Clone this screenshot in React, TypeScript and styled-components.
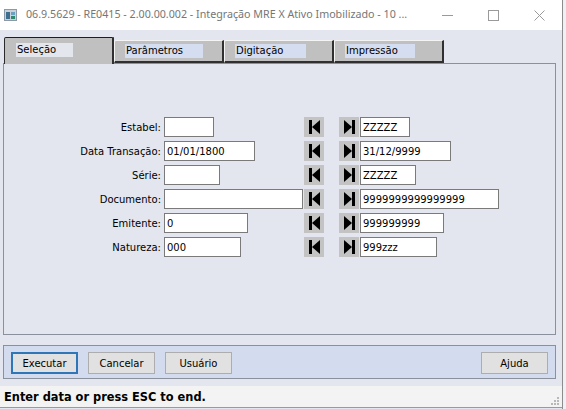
import React from 'react';
import styled, { createGlobalStyle } from 'styled-components';

const GlobalStyle = createGlobalStyle`
  html, body {
    margin: 0;
    padding: 0;
    background: #eef0f4;
  }
  body {
    width: 566px;
    height: 409px;
    overflow: hidden;
  }
  * {
    box-sizing: border-box;
  }
`;

const Window = styled.div`
  width: 563px;
  height: 409px;
  display: flex;
  flex-direction: column;
  background: #e3e6ee;
  border-right: 1px solid #8c8c8c;
  font-family: 'DejaVu Sans', Verdana, sans-serif;
  font-size: 10px;
  color: #000;
`;

const TitleBar = styled.div`
  height: 30px;
  flex: none;
  display: flex;
  align-items: center;
  background: #fff;
`;

const AppIcon = styled.svg`
  margin: 0 9px 1px 4px;
  flex: none;
`;

const TitleText = styled.div`
  flex: 1;
  min-width: 0;
  font-family: 'Noto Sans', 'Open Sans', sans-serif;
  font-size: 10.7px;
  color: #767676;
  white-space: nowrap;
  margin-bottom: 2px;
`;

const Caption = styled.div`
  width: 46px;
  height: 30px;
  display: flex;
  align-items: center;
  justify-content: center;
  flex: none;
`;

const Body = styled.div`
  flex: 1;
  display: flex;
  flex-direction: column;
  padding: 7px 6px 0 3px;
`;

const TabStrip = styled.div`
  display: flex;
  align-items: flex-end;
  padding-left: 1px;
  height: 26px;
  flex: none;
`;

const Tab = styled.div<{ $active?: boolean }>`
  width: 110px;
  height: ${(p) => (p.$active ? '27px' : '23px')};
  background: #c0c0c0;
  display: flex;
  align-items: flex-start;
  padding: ${(p) => (p.$active ? '5px 0 0 11px' : '3px 0 0 10px')};
  border-top: 1px solid ${(p) => (p.$active ? '#1e1e1e' : '#f4f4f4')};
  border-left: 1px solid ${(p) => (p.$active ? '#2a2a2a' : '#f4f4f4')};
  border-right: 2px solid #303030;
  border-bottom: ${(p) => (p.$active ? 'none' : '2px solid #303030')};
  border-top-left-radius: 2px;
  margin-bottom: ${(p) => (p.$active ? '-1px' : '0')};
  position: relative;
  z-index: ${(p) => (p.$active ? 1 : 0)};
`;

const TabLabel = styled.span<{ $w: number; $active?: boolean }>`
  width: ${(p) => p.$w}px;
  height: 14px;
  line-height: 14px;
  padding-left: 1px;
  background: ${(p) => (p.$active ? '#e4e6ee' : '#d5ddf1')};
  white-space: nowrap;
`;

const Panel = styled.div`
  height: 272px;
  flex: none;
  border: 1px solid #8b919c;
  padding-top: 53px;
`;

const FormGrid = styled.div`
  display: grid;
  grid-template-columns: 160px 140px 20px 15px 20px auto;
  grid-auto-rows: 20px;
  row-gap: 4px;
  align-items: center;
`;

const FieldLabel = styled.label`
  text-align: right;
  padding-right: 3px;
  white-space: nowrap;
`;

const Field = styled.input<{ $w: number; $gap?: number }>`
  width: ${(p) => p.$w}px;
  height: 20px;
  margin: 0 0 0 ${(p) => p.$gap ?? 0}px;
  padding: 0 0 0 2px;
  border: 1px solid #7a7a7a;
  background: #fff;
  font-family: 'DejaVu Sans', Verdana, sans-serif;
  font-size: 10px;
  color: #000;
  outline: none;
`;

const NavButton = styled.div`
  width: 20px;
  height: 20px;
  background: #c3c3c3;
  display: flex;
  align-items: center;
  justify-content: center;
`;

const Spacer = styled.span``;

const ButtonBar = styled.div`
  margin-top: 10px;
  height: 34px;
  flex: none;
  display: flex;
  align-items: flex-start;
  gap: 10px;
  padding: 6px 7px 0;
  background: #d3dcee;
  border: 1px solid #8b919c;
`;

const ActionButton = styled.button<{ $focused?: boolean; $push?: boolean }>`
  width: 67px;
  height: 22px;
  padding: 0;
  background: #e1e1e1;
  border: ${(p) => (p.$focused ? '2px solid #2f76b9' : '1px solid #adadad')};
  font-family: 'DejaVu Sans', Verdana, sans-serif;
  font-size: 10px;
  color: #000;
  margin-left: ${(p) => (p.$push ? 'auto' : '0')};
`;

const StatusBar = styled.div`
  margin: 7px -6px 0 -3px;
  height: 22px;
  flex: none;
  display: flex;
  align-items: center;
  justify-content: space-between;
  padding: 0 3px 0 4px;
  background: #f3f3f3;
  border-bottom: 1px solid #9a9a9a;
  font-weight: bold;
  font-size: 11.4px;
`;

const Grip = styled.svg`
  align-self: flex-end;
  margin-bottom: 2px;
`;

const FirstIcon = () => (
  <svg width="11" height="14" viewBox="0 0 11 14">
    <rect x="0" y="0" width="3" height="14" fill="#000" />
    <polygon points="11,0 11,14 3,7" fill="#000" />
  </svg>
);

const LastIcon = () => (
  <svg width="11" height="14" viewBox="0 0 11 14">
    <polygon points="0,0 0,14 8,7" fill="#000" />
    <rect x="8" y="0" width="3" height="14" fill="#000" />
  </svg>
);

type RangeRow = {
  label: string;
  from: string;
  fromW: number;
  to: string;
  toW: number;
};

const rows: RangeRow[] = [
  { label: 'Estabel:', from: '', fromW: 50, to: 'ZZZZZ', toW: 50 },
  { label: 'Data Transação:', from: '01/01/1800', fromW: 91, to: '31/12/9999', toW: 91 },
  { label: 'Série:', from: '', fromW: 56, to: 'ZZZZZ', toW: 56 },
  { label: 'Documento:', from: '', fromW: 139, to: '9999999999999999', toW: 139 },
  { label: 'Emitente:', from: '0', fromW: 84, to: '999999999', toW: 84 },
  { label: 'Natureza:', from: '000', fromW: 77, to: '999zzz', toW: 77 },
];

const tabs = [
  { name: 'Seleção', w: 57 },
  { name: 'Parâmetros', w: 78 },
  { name: 'Digitação', w: 71 },
  { name: 'Impressão', w: 70 },
];

export default function App() {
  return (
    <>
      <GlobalStyle />
      <Window>
        <TitleBar>
          <AppIcon width="13" height="12" viewBox="0 0 13 12">
            <rect x="0" y="0" width="13" height="12" fill="#8d99a6" />
            <rect x="1" y="1" width="11" height="10" fill="#c9d2db" />
            <rect x="2" y="3" width="4" height="7" fill="#3e6f8f" />
            <rect x="7" y="3" width="4" height="3" fill="#6aa0c0" />
            <rect x="7" y="7" width="4" height="3" fill="#2d8a6e" />
          </AppIcon>
          <TitleText>
            06.9.5629 - RE0415 - 2.00.00.002 - Integração MRE X Ativo Imobilizado - 10 ...
          </TitleText>
          <Caption>
            <svg width="11" height="1" viewBox="0 0 11 1">
              <rect width="11" height="1" fill="#9a9a9a" />
            </svg>
          </Caption>
          <Caption>
            <svg width="11" height="11" viewBox="0 0 11 11">
              <rect x="0.5" y="0.5" width="10" height="10" fill="none" stroke="#9a9a9a" />
            </svg>
          </Caption>
          <Caption>
            <svg width="11" height="11" viewBox="0 0 11 11">
              <path d="M0.5 0.5 L10.5 10.5 M10.5 0.5 L0.5 10.5" stroke="#9a9a9a" />
            </svg>
          </Caption>
        </TitleBar>

        <Body>
          <TabStrip>
            {tabs.map((t, i) => (
              <Tab key={t.name} $active={i === 0}>
                <TabLabel $w={t.w} $active={i === 0}>
                  {t.name}
                </TabLabel>
              </Tab>
            ))}
          </TabStrip>

          <Panel>
            <FormGrid>
              {rows.map((r) => (
                <React.Fragment key={r.label}>
                  <FieldLabel>{r.label}</FieldLabel>
                  <Field $w={r.fromW} defaultValue={r.from} readOnly />
                  <NavButton>
                    <FirstIcon />
                  </NavButton>
                  <Spacer />
                  <NavButton>
                    <LastIcon />
                  </NavButton>
                  <Field $w={r.toW} $gap={1} defaultValue={r.to} readOnly />
                </React.Fragment>
              ))}
            </FormGrid>
          </Panel>

          <ButtonBar>
            <ActionButton $focused>Executar</ActionButton>
            <ActionButton>Cancelar</ActionButton>
            <ActionButton>Usuário</ActionButton>
            <ActionButton $push>Ajuda</ActionButton>
          </ButtonBar>

          <StatusBar>
            <span>Enter data or press ESC to end.</span>
            <Grip width="8" height="8" viewBox="0 0 8 8">
              <rect x="6" y="0" width="2" height="2" fill="#b8b8b8" />
              <rect x="3" y="3" width="2" height="2" fill="#b8b8b8" />
              <rect x="6" y="3" width="2" height="2" fill="#b8b8b8" />
              <rect x="0" y="6" width="2" height="2" fill="#b8b8b8" />
              <rect x="3" y="6" width="2" height="2" fill="#b8b8b8" />
              <rect x="6" y="6" width="2" height="2" fill="#b8b8b8" />
            </Grip>
          </StatusBar>
        </Body>
      </Window>
    </>
  );
}
